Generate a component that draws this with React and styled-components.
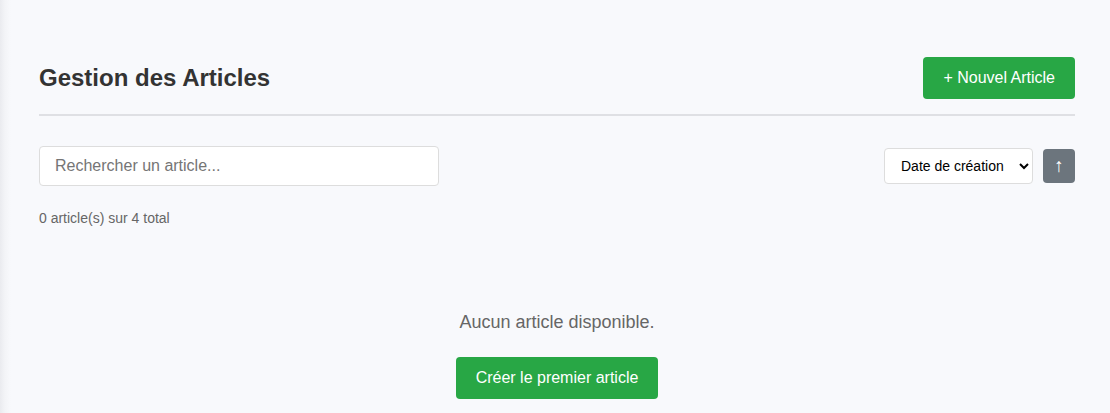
import styled, { createGlobalStyle } from "styled-components";

const GlobalStyle = createGlobalStyle`
  html, body {
    margin: 0;
    padding: 0;
    height: 100%;
  }
  body {
    font-family: "Liberation Sans", Arial, sans-serif;
    background: #f8f9fc;
  }
`;

export default function App() {
  return (
    <>
      <GlobalStyle />
      <Page>
        <Header>
          <Title>Gestion des Articles</Title>
          <GreenButton>+ Nouvel Article</GreenButton>
        </Header>

        <Controls>
          <SearchInput type="text" placeholder="Rechercher un article..." />
          <SortGroup>
            <SortSelect defaultValue="date">
              <option value="date">Date de création</option>
              <option value="title">Titre</option>
            </SortSelect>
            <SortButton title="Ordre croissant">↑</SortButton>
          </SortGroup>
        </Controls>

        <Count>0 article(s) sur 4 total</Count>

        <EmptyState>
          <EmptyText>Aucun article disponible.</EmptyText>
          <GreenButton>Créer le premier article</GreenButton>
        </EmptyState>
      </Page>
    </>
  );
}

const Page = styled.main`
  min-height: 413px;
  box-sizing: border-box;
  padding: 57px 35px 0 39px;
  background: linear-gradient(to right, #eaebef 0, #f3f4f7 5px, #f8f9fc 11px);
`;

const Header = styled.div`
  display: flex;
  align-items: center;
  justify-content: space-between;
  padding-bottom: 15px;
  border-bottom: 2px solid #dfe0e4;
  margin-bottom: 30px;
`;

const Title = styled.h1`
  margin: 0;
  font-size: 24px;
  font-weight: 700;
  color: #333;
`;

const GreenButton = styled.button`
  font-family: inherit;
  font-size: 16px;
  line-height: 18px;
  color: #fff;
  background: #28a745;
  border: none;
  border-radius: 4px;
  padding: 12px 20px;
  cursor: pointer;
`;

const Controls = styled.div`
  display: flex;
  align-items: center;
  justify-content: space-between;
  margin-bottom: 24px;
`;

const SearchInput = styled.input`
  box-sizing: border-box;
  width: 400px;
  height: 40px;
  padding: 10px 15px;
  font-family: inherit;
  font-size: 16px;
  border: 1px solid #ddd;
  border-radius: 4px;
  background: #fff;
  outline: none;

  &::placeholder {
    color: #757575;
  }
`;

const SortGroup = styled.div`
  display: flex;
  align-items: center;
  gap: 10px;
`;

const SortSelect = styled.select`
  box-sizing: border-box;
  height: 36px;
  width: 149px;
  padding: 8px 12px;
  font-family: inherit;
  font-size: 14px;
  color: #000;
  background: #fff;
  border: 1px solid #ddd;
  border-radius: 4px;
`;

const SortButton = styled.button`
  box-sizing: border-box;
  width: 32px;
  height: 34px;
  padding: 0;
  font-family: "Liberation Sans", sans-serif;
  font-size: 19px;
  line-height: 34px;
  color: #fff;
  background: #6c757d;
  border: none;
  border-radius: 4px;
  cursor: pointer;
`;

const Count = styled.p`
  margin: 0;
  font-size: 14px;
  line-height: 16px;
  color: #666;
`;

const EmptyState = styled.div`
  display: flex;
  flex-direction: column;
  align-items: center;
  padding-top: 86px;
`;

const EmptyText = styled.p`
  margin: 0 0 24px;
  font-size: 18px;
  line-height: 21px;
  color: #666;
`;
